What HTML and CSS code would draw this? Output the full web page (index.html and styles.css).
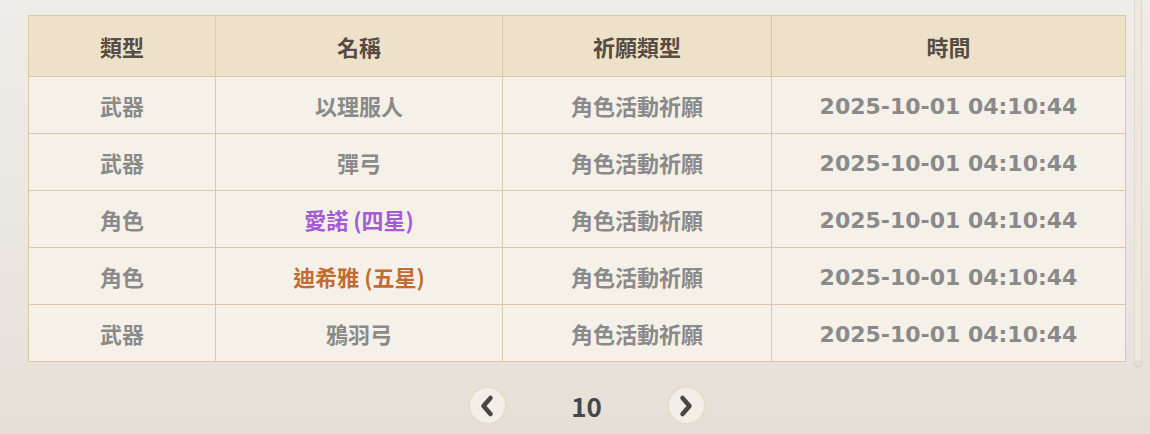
FILE: index.html
```html
<!DOCTYPE html>
<html lang="zh-Hant">
<head>
<meta charset="utf-8">
<link rel="stylesheet" href="styles.css">
</head>
<body>
<div class="page">
  <main class="content">
    <table class="records">
      <colgroup>
        <col class="c1"><col class="c2"><col class="c3"><col class="c4">
      </colgroup>
      <thead>
        <tr><th>類型</th><th>名稱</th><th>祈願類型</th><th>時間</th></tr>
      </thead>
      <tbody>
        <tr><td>武器</td><td>以理服人</td><td>角色活動祈願</td><td class="time">2025-10-01 04:10:44</td></tr>
        <tr><td>武器</td><td>彈弓</td><td>角色活動祈願</td><td class="time">2025-10-01 04:10:44</td></tr>
        <tr><td>角色</td><td class="star4">愛諾 (四星)</td><td>角色活動祈願</td><td class="time">2025-10-01 04:10:44</td></tr>
        <tr><td>角色</td><td class="star5">迪希雅 (五星)</td><td>角色活動祈願</td><td class="time">2025-10-01 04:10:44</td></tr>
        <tr><td>武器</td><td>鴉羽弓</td><td>角色活動祈願</td><td class="time">2025-10-01 04:10:44</td></tr>
      </tbody>
    </table>
    <nav class="pager">
      <button class="pbtn" aria-label="上一頁">
        <svg width="18" height="24" viewBox="0 0 18 24"><path d="M12.5 4 L5.5 12 L12.5 20" fill="none" stroke="#494644" stroke-width="4.5" stroke-linecap="round" stroke-linejoin="round"/></svg>
      </button>
      <span class="pnum">10</span>
      <button class="pbtn" aria-label="下一頁">
        <svg width="18" height="24" viewBox="0 0 18 24"><path d="M5.5 4 L12.5 12 L5.5 20" fill="none" stroke="#494644" stroke-width="4.5" stroke-linecap="round" stroke-linejoin="round"/></svg>
      </button>
    </nav>
  </main>
  <div class="scroll">
    <div class="track"></div>
    <svg class="arrow" width="12" height="10" viewBox="0 0 12 10"><path d="M1 2 L6 8 L11 2" fill="none" stroke="#ddd6ca" stroke-width="1.5"/></svg>
  </div>
</div>
</body>
</html>
```
FILE: styles.css
```css
html, body {
  margin: 0;
  height: 100%;
}
body {
  background: linear-gradient(180deg, #efede9 0%, #ebe7e1 50%, #e5dfd7 100%);
  font-family: "Noto Sans CJK TC", "Noto Sans", sans-serif;
  overflow: hidden;
}
.page {
  display: flex;
  height: 434px;
}
.content {
  padding: 15px 0 0 28px;
  width: 1097px;
}
.records {
  width: 1097px;
  border-collapse: collapse;
  table-layout: fixed;
  border: 1px solid #dcc8a4;
}
.c1 { width: 187px; }
.c2 { width: 287px; }
.c3 { width: 269px; }
.c4 { width: 354px; }
.records th, .records td {
  border: 1px solid #dcc8a4;
  text-align: center;
  font-weight: 700;
  font-size: 22px;
  padding: 0;
}
.records th {
  background: #eee1c9;
  color: #564c44;
  height: 60px;
}
.records td {
  background: #f5f1e8;
  color: #8a8a8a;
  height: 56px;
}
.records td.star4 { color: #a35bd6; }
.records td.star5 { color: #c06c32; }
.records td.time {
  font-family: "DejaVu Sans", "Noto Sans", sans-serif;
  font-size: 22px;
  padding-top: 3px;
  height: 53px;
}
.pager {
  display: flex;
  justify-content: center;
  align-items: center;
  padding-left: 20px;
  margin-top: 24px;
}
.pbtn {
  width: 39px;
  height: 39px;
  border-radius: 50%;
  border: 2px solid #e7dcc9;
  background: #f3efe8;
  display: flex;
  align-items: center;
  justify-content: center;
  padding: 0;
}
.pnum {
  width: 160px;
  text-align: center;
  font-size: 26px;
  font-weight: 700;
  color: #47464a;
}
.scroll {
  margin-left: 8px;
  width: 10px;
  display: flex;
  flex-direction: column;
  align-items: center;
}
.track {
  width: 8px;
  height: 362px;
  border: 1px solid #e0d9cd;
  border-top: none;
  background: #eee8de;
  box-sizing: border-box;
}
.arrow {
  margin-top: -2px;
}
```
